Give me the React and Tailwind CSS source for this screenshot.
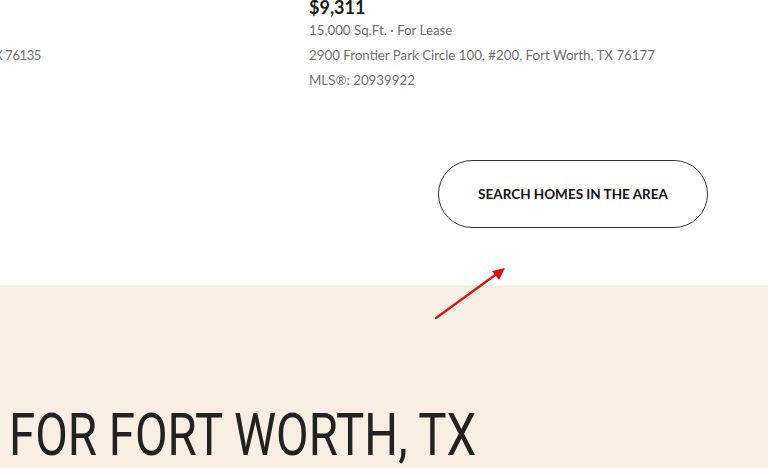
export default function App() {
  const body = { fontFamily: "Lato, 'Noto Sans', sans-serif" };
  return (
    <div className="w-[768px] h-[468px] overflow-hidden bg-white relative" style={body}>
      <div className="h-[285px] bg-white flex flex-col">
        <div className="flex -mt-[3px]">
          <div className="w-[309px] flex flex-col">
            <div className="h-[21px]" />
            <div className="h-[25px]" />
            <div className="w-[41px] overflow-hidden flex justify-end whitespace-nowrap text-[13px] tracking-[-0.4px] leading-[25px] text-[#6f6f6f]">
              4200 Bryant Irvin Rd, Fort Worth, TX 76135
            </div>
          </div>
          <div className="flex flex-col text-[#6f6f6f] text-[13.3px] leading-[25px]">
            <div className="text-[18px] leading-[21px] font-bold text-[#1a1a1a]">$9,311</div>
            <div>15,000 Sq.Ft. · For Lease</div>
            <div>2900 Frontier Park Circle 100, #200, Fort Worth, TX 76177</div>
            <div>MLS®: 20939922</div>
          </div>
        </div>
        <div className="flex justify-end pr-[60px] mt-[67px]">
          <button className="w-[270px] h-[68px] rounded-full border border-[#333] bg-white text-[13.5px] font-bold uppercase text-[#111]">
            Search Homes in the Area
          </button>
        </div>
      </div>
      <div className="h-[183px] bg-[#f8efe4] flex items-end">
        <h2
          className="ml-[9px] -mb-[2px] text-[60px] leading-[70px] text-[#222] whitespace-nowrap origin-left scale-x-[0.79]"
          style={{ fontFamily: "Roboto, 'DejaVu Sans', sans-serif" }}
        >
          FOR FORT WORTH, TX
        </h2>
      </div>
      <svg className="absolute left-[430px] top-[260px]" width="90" height="65" viewBox="0 0 90 65">
        <line x1="6" y1="58" x2="68" y2="13" stroke="#e01010" strokeWidth="2.2" strokeLinecap="round" />
        <polygon points="75,8 62,11 69,20" fill="#e01010" />
      </svg>
    </div>
  );
}
